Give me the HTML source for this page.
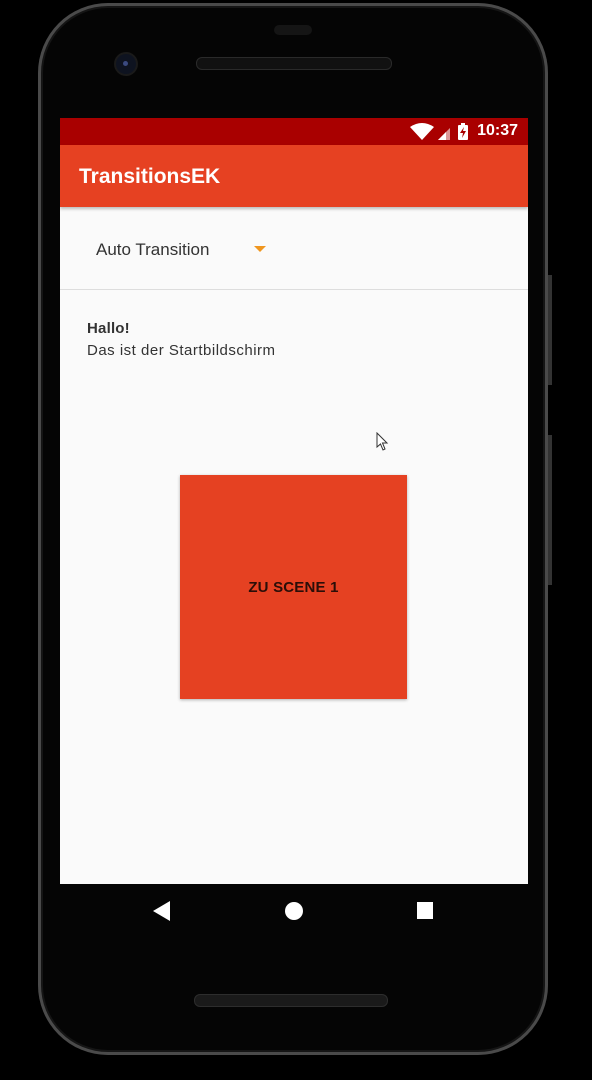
<!DOCTYPE html>
<html><head><meta charset="utf-8"><style>
html,body{margin:0;padding:0;background:#000;width:592px;height:1080px;overflow:hidden;font-family:"Liberation Sans",sans-serif;}
.phone{position:absolute;left:38px;top:3px;width:510px;height:1052px;border-radius:70px;background:#050505;box-shadow:inset 0 0 0 3px #4a4a4a, inset 0 0 0 5px #151515;}
.scr{position:absolute;left:60px;top:118px;width:468px;height:766px;background:#fafafa;overflow:hidden;}
.sb{position:absolute;left:0;top:0;width:468px;height:27px;background:#a90000;}
.tb{position:absolute;left:0;top:27px;width:468px;height:62px;background:#e64122;box-shadow:0 2px 3px rgba(0,0,0,.25);}
.title{position:absolute;left:19px;top:47px;color:#fff;font-size:21px;font-weight:bold;}
.time{position:absolute;right:10px;top:4px;color:#fff;font-size:16px;font-weight:bold;}
</style></head><body>
<div class="phone"></div>
<div style="position:absolute;left:274px;top:25px;width:38px;height:10px;border-radius:5px;background:#151515"></div>
<div style="position:absolute;left:196px;top:57px;width:194px;height:11px;border-radius:6px;background:#111;border:1px solid #2a2a2a"></div>
<div style="position:absolute;left:116px;top:54px;width:20px;height:20px;border-radius:50%;background:#0e1320;box-shadow:0 0 0 2px #1a1a1a"></div>
<div style="position:absolute;left:123px;top:61px;width:5px;height:5px;border-radius:50%;background:#3b4a80"></div>
<div style="position:absolute;left:548px;top:275px;width:4px;height:110px;background:#333"></div>
<div style="position:absolute;left:548px;top:435px;width:4px;height:150px;background:#333"></div>
<div style="position:absolute;left:194px;top:994px;width:192px;height:11px;border-radius:6px;background:#1a1a1a;border:1px solid #2d2d2d"></div>
<div class="scr">
<div class="sb">
<svg style="position:absolute;left:350px;top:5px" width="60" height="18" viewBox="0 0 60 18">
<path d="M0 4 Q12 -4 24 4 L12 17 Z" fill="#fff"/>
<path d="M28 17 L40 5 L40 17 Z" fill="#fff" opacity=".6"/><path d="M28 17 L36 9 L36 17 Z" fill="#fff"/>
<rect x="48" y="2" width="10" height="15" rx="1" fill="#fff"/><rect x="51" y="0" width="4" height="3" fill="#fff"/>
<path d="M54 4 L50 10 L53 10 L52 15 L56 8 L53 8 Z" fill="#a90000"/>
</svg>
<div class="time">10:37</div>
</div>
<div class="tb"></div>
<div class="title">TransitionsEK</div>
<div style="position:absolute;left:36px;top:122px;font-size:17px;color:#333">Auto Transition</div>
<div style="position:absolute;left:194px;top:128px;width:0;height:0;border-left:6px solid transparent;border-right:6px solid transparent;border-top:6px solid #f0961e"></div>
<div style="position:absolute;left:0;top:171px;width:468px;height:1px;background:#ddd"></div>
<div style="position:absolute;left:27px;top:202px;font-size:15px;font-weight:bold;color:#333;letter-spacing:.2px">Hallo!</div>
<div style="position:absolute;left:27px;top:224px;font-size:15px;color:#333;letter-spacing:.5px">Das ist der Startbildschirm</div>
<svg style="position:absolute;left:316px;top:314px" width="14" height="20" viewBox="0 0 14 20"><path d="M1 1 L1 15 L4.5 12 L7 18 L9 17 L6.5 11 L11 11 Z" fill="#fff" stroke="#333" stroke-width="1"/></svg>
<div style="position:absolute;left:120px;top:357px;width:227px;height:224px;background:#e54122;box-shadow:0 1px 3px rgba(0,0,0,.3);display:flex;align-items:center;justify-content:center;font-size:15px;font-weight:bold;letter-spacing:.2px;color:#2a0e08;">ZU SCENE 1</div>
</div>
<svg style="position:absolute;left:150px;top:898px" width="290" height="26" viewBox="0 0 290 26">
<path d="M3 13 L20 3 L20 23 Z" fill="#fff"/>
<circle cx="144" cy="13" r="9" fill="#fff"/>
<rect x="267" y="4" width="16" height="17" fill="#fff"/>
</svg>
</body></html>
